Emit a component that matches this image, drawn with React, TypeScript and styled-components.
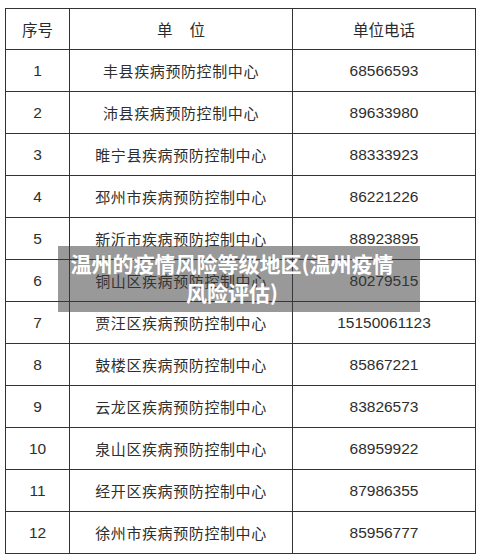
import React from 'react'
import styled, { createGlobalStyle } from 'styled-components'

const GlobalStyle = createGlobalStyle`
  html, body {
    margin: 0;
    padding: 0;
    background: #ffffff;
  }
  body {
    font-family: "Liberation Sans", "Noto Sans CJK SC", sans-serif;
    color: #2e2e2e;
  }
`

const rows = [
  ['1', '丰县疾病预防控制中心', '68566593'],
  ['2', '沛县疾病预防控制中心', '89633980'],
  ['3', '睢宁县疾病预防控制中心', '88333923'],
  ['4', '邳州市疾病预防控制中心', '86221226'],
  ['5', '新沂市疾病预防控制中心', '88923895'],
  ['6', '铜山区疾病预防控制中心', '80279515'],
  ['7', '贾汪区疾病预防控制中心', '15150061123'],
  ['8', '鼓楼区疾病预防控制中心', '85867221'],
  ['9', '云龙区疾病预防控制中心', '83826573'],
  ['10', '泉山区疾病预防控制中心', '68959922'],
  ['11', '经开区疾病预防控制中心', '87986355'],
  ['12', '徐州市疾病预防控制中心', '85956777'],
]

const Page = styled.div`
  position: relative;
  width: 480px;
  height: 560px;
  box-sizing: border-box;
  padding: 8px 5px 0 5px;
  overflow: hidden;
`

const Table = styled.table`
  width: 470px;
  border-collapse: collapse;
  table-layout: fixed;
  border: 1px solid #4a4a4a;
`

const HeadRow = styled.tr`
  height: 41px;
`

const Row = styled.tr`
  height: 42px;
`

const Cell = styled.td<{ $cjk?: boolean }>`
  border: 1px solid #333;
  padding: 0;
  text-align: center;
  vertical-align: middle;
  font-size: ${({ $cjk }) => ($cjk ? '15px' : '15.5px')};
  letter-spacing: ${({ $cjk }) => ($cjk ? '0.6px' : '0')};
  color: #2e2e2e;
`

const HeadCell = styled.th`
  border: 1px solid #333;
  padding: 0;
  font-weight: normal;
  font-size: 15.5px;
  text-align: center;
  vertical-align: middle;
  color: #2a2a2a;
  white-space: pre;
`

const Banner = styled.div`
  position: absolute;
  left: 58px;
  top: 246px;
  width: 362px;
  height: 66px;
  box-sizing: border-box;
  padding: 3px 22px 0 8px;
  background: rgba(60, 60, 60, 0.52);
  color: #ffffff;
  font-family: "Noto Sans CJK SC", sans-serif;
  font-weight: 700;
  font-size: 21px;
  line-height: 29px;
  text-align: center;
`

export default function App() {
  return (
    <>
      <GlobalStyle />
      <Page>
        <Table>
          <colgroup>
            <col style={{ width: 64 }} />
            <col style={{ width: 223 }} />
            <col style={{ width: 183 }} />
          </colgroup>
          <thead>
            <HeadRow>
              <HeadCell>序号</HeadCell>
              <HeadCell>{'单    位'}</HeadCell>
              <HeadCell>单位电话</HeadCell>
            </HeadRow>
          </thead>
          <tbody>
            {rows.map(([n, unit, tel]) => (
              <Row key={n}>
                <Cell>{n}</Cell>
                <Cell $cjk>{unit}</Cell>
                <Cell>{tel}</Cell>
              </Row>
            ))}
          </tbody>
        </Table>
        <Banner>
          温州的疫情风险等级地区(温州疫情
          <br />
          风险评估)
        </Banner>
      </Page>
    </>
  )
}
